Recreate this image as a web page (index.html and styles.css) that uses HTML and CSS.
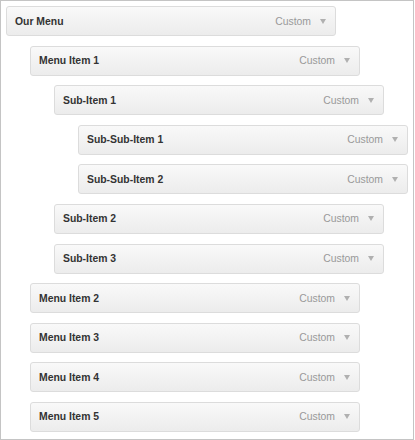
FILE: index.html
```html
<!DOCTYPE html>
<html lang="en">
<head>
    <meta charset="UTF-8">
    <title>Menu Structure</title>
    <link rel="stylesheet" href="styles.css">
</head>
<body>
<div class="menu-frame">
    <ul class="menu-list">
        <li>
            <div class="menu-item"><span class="item-title">Our Menu</span><span class="item-type">Custom</span><span class="item-arrow"></span></div>
            <ul class="menu-list sub">
                <li>
                    <div class="menu-item"><span class="item-title">Menu Item 1</span><span class="item-type">Custom</span><span class="item-arrow"></span></div>
                    <ul class="menu-list sub">
                        <li>
                            <div class="menu-item"><span class="item-title">Sub-Item 1</span><span class="item-type">Custom</span><span class="item-arrow"></span></div>
                            <ul class="menu-list sub">
                                <li><div class="menu-item"><span class="item-title">Sub-Sub-Item 1</span><span class="item-type">Custom</span><span class="item-arrow"></span></div></li>
                                <li><div class="menu-item"><span class="item-title">Sub-Sub-Item 2</span><span class="item-type">Custom</span><span class="item-arrow"></span></div></li>
                            </ul>
                        </li>
                        <li><div class="menu-item"><span class="item-title">Sub-Item 2</span><span class="item-type">Custom</span><span class="item-arrow"></span></div></li>
                        <li><div class="menu-item"><span class="item-title">Sub-Item 3</span><span class="item-type">Custom</span><span class="item-arrow"></span></div></li>
                    </ul>
                </li>
                <li><div class="menu-item"><span class="item-title">Menu Item 2</span><span class="item-type">Custom</span><span class="item-arrow"></span></div></li>
                <li><div class="menu-item"><span class="item-title">Menu Item 3</span><span class="item-type">Custom</span><span class="item-arrow"></span></div></li>
                <li><div class="menu-item"><span class="item-title">Menu Item 4</span><span class="item-type">Custom</span><span class="item-arrow"></span></div></li>
                <li><div class="menu-item"><span class="item-title">Menu Item 5</span><span class="item-type">Custom</span><span class="item-arrow"></span></div></li>
            </ul>
        </li>
    </ul>
</div>
</body>
</html>
```

FILE: styles.css
```css
body {
    margin: 0;
    font-family: "Liberation Sans", Arial, sans-serif;
    background: #fff;
}
.menu-frame {
    box-sizing: border-box;
    width: 414px;
    height: 440px;
    border: 1px solid #c4c4c4;
    padding: 5px;
    overflow: hidden;
}
.menu-list {
    list-style: none;
    margin: 0;
    padding: 0;
}
.menu-list.sub {
    padding-left: 24px;
}
.menu-item {
    box-sizing: border-box;
    display: flex;
    align-items: center;
    width: 330px;
    height: 30px;
    margin-bottom: 9.6px;
    padding: 0 9px 0 8px;
    border: 1px solid #dcdcdc;
    border-radius: 3px;
    background: linear-gradient(#f9f9f9, #ececec);
    font-size: 10.4px;
}
.item-title {
    flex: 1;
    font-weight: bold;
    color: #333;
}
.item-type {
    color: #999;
    margin-right: 9px;
}
.item-arrow {
    width: 0;
    height: 0;
    border-left: 3px solid transparent;
    border-right: 3px solid transparent;
    border-top: 5px solid #b0b0b0;
}
```
